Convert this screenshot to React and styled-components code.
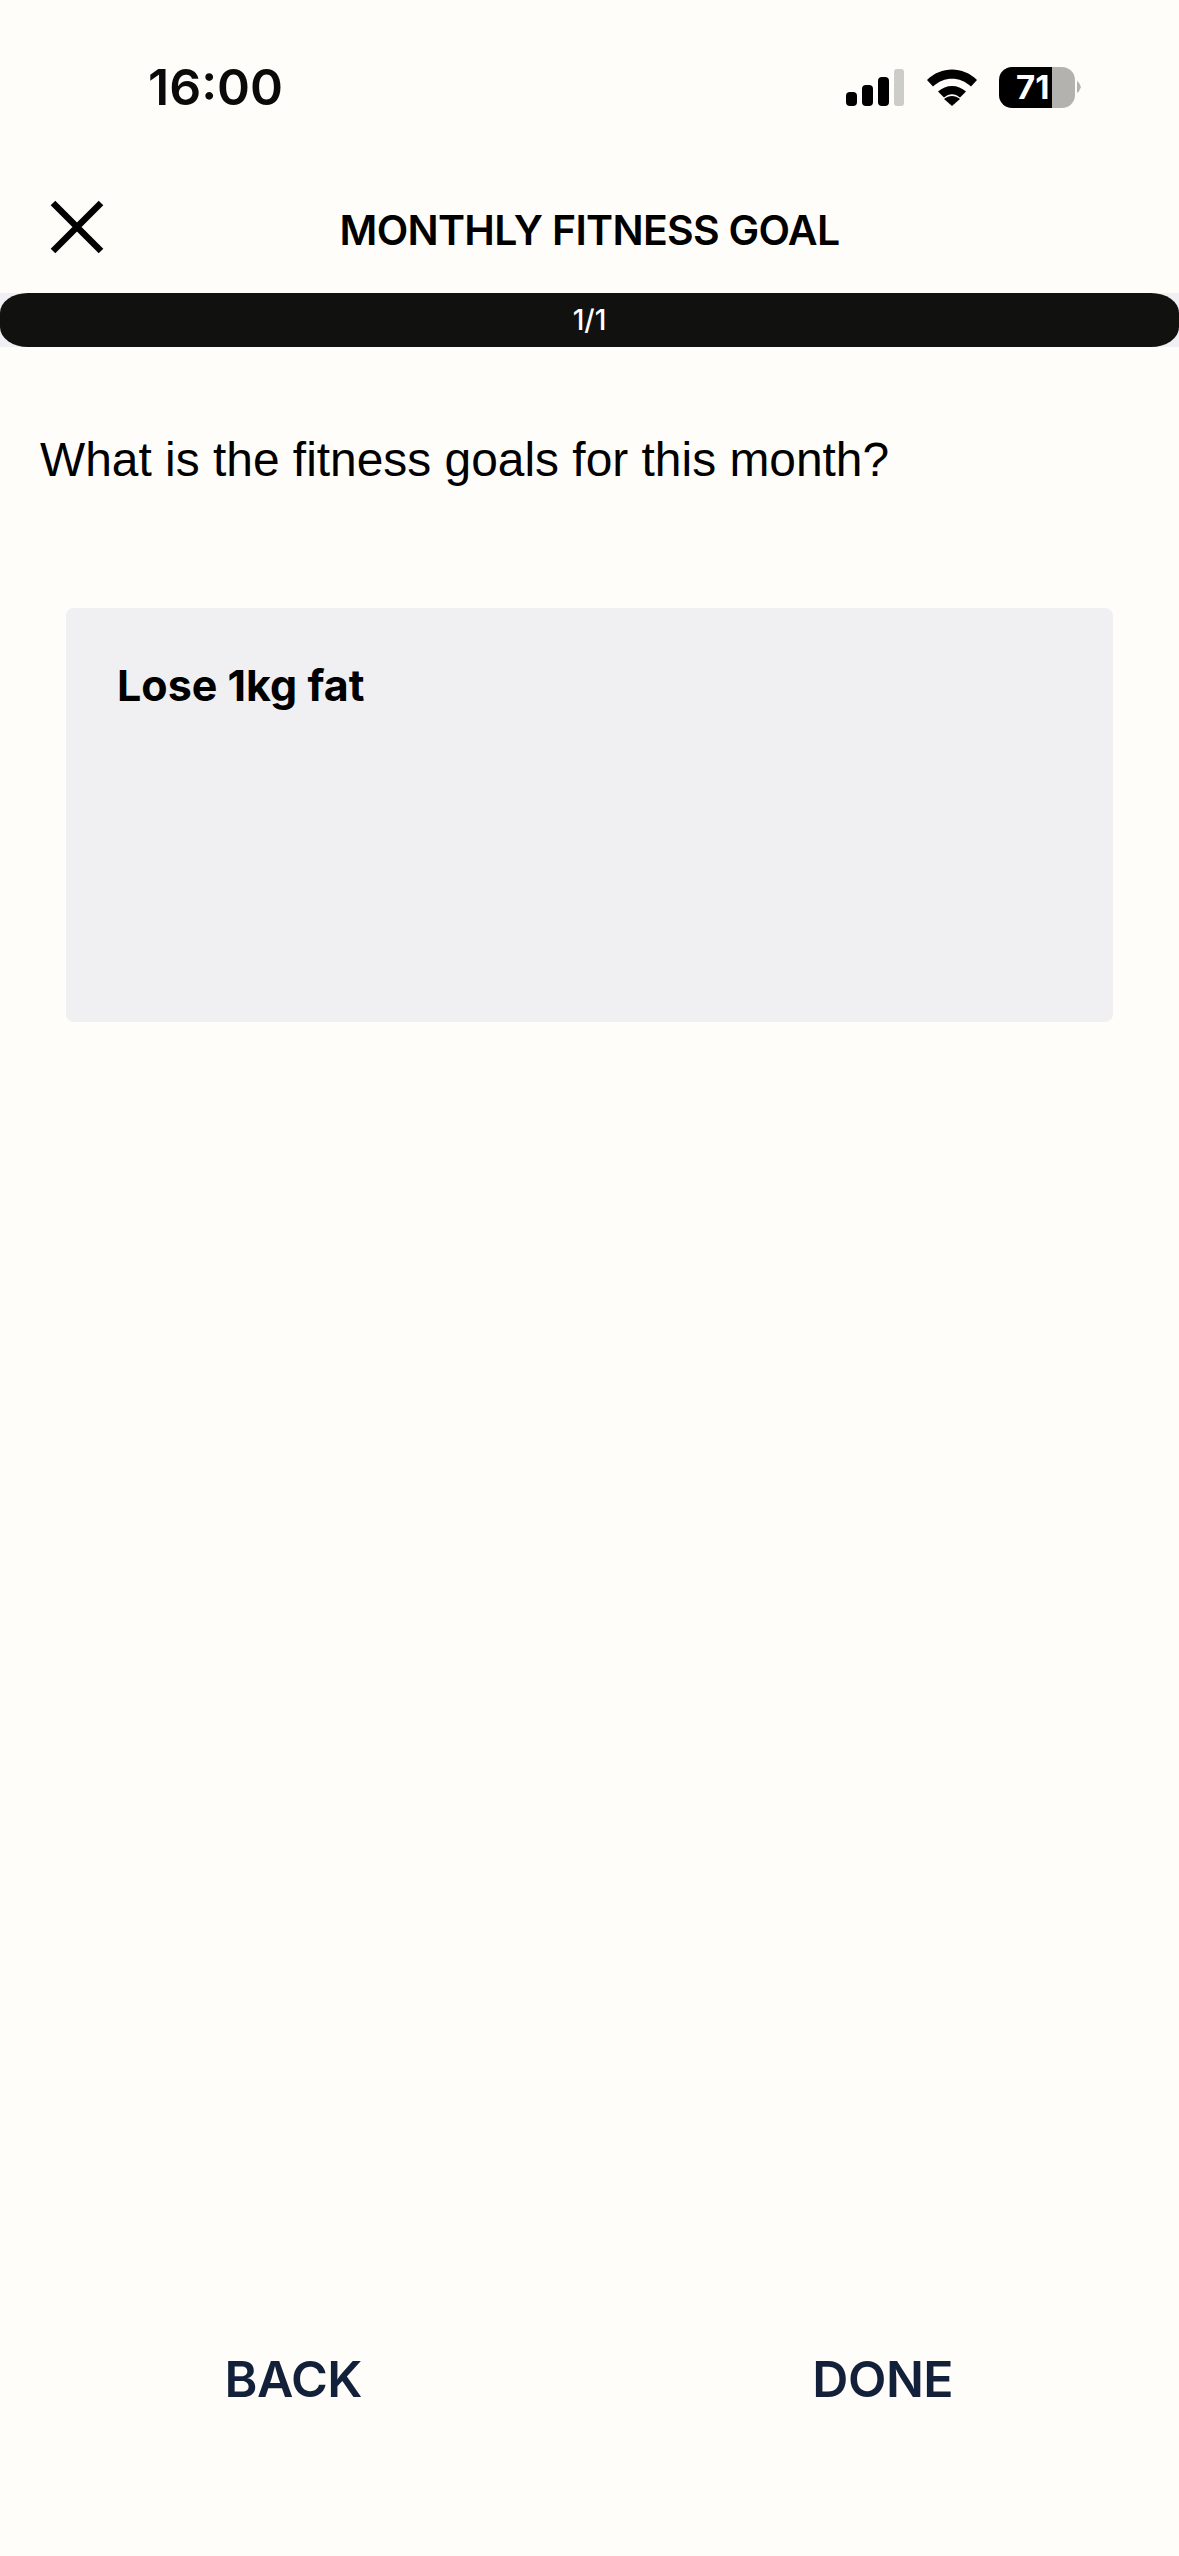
import React from 'react';
import styled, { createGlobalStyle } from 'styled-components';

const GlobalStyle = createGlobalStyle`
  html, body {
    margin: 0;
    padding: 0;
    background: #fffdf9;
  }
  * {
    box-sizing: border-box;
  }
`;

const Page = styled.div`
  width: 1179px;
  height: 2556px;
  display: flex;
  flex-direction: column;
  background: #fffdf9;
  color: #000;
  font-family: Inter, "Noto Sans", sans-serif;
  overflow: hidden;
`;

const StatusBar = styled.div`
  height: 180px;
  padding: 60px 98px 66px 148px;
  display: flex;
  align-items: center;
  justify-content: space-between;
`;

const Time = styled.div`
  font-size: 50px;
  font-weight: 600;
  line-height: 54px;
  color: #0a0a0a;
`;

const StatusIcons = styled.div`
  display: flex;
  align-items: center;
`;

const Signal = styled.svg`
  width: 58px;
  height: 37px;
  margin-right: 23px;
`;

const Wifi = styled.svg`
  width: 50px;
  height: 37px;
  margin-right: 22px;
`;

const Battery = styled.div`
  width: 76px;
  height: 41px;
  border-radius: 13px;
  background: linear-gradient(90deg, #000 ${p => p.$level}%, #b3b2ae ${p => p.$level}%);
  color: #fff;
  font-size: 33px;
  font-weight: 700;
  line-height: 41px;
  padding-left: 17px;
`;

const BatteryNub = styled.div`
  width: 4px;
  height: 12px;
  margin-left: 2px;
  background: #b3b2ae;
  clip-path: polygon(0 0, 50% 15%, 100% 50%, 50% 85%, 0 100%);
`;

const Header = styled.div`
  height: 100px;
  padding-left: 50px;
  display: grid;
  grid-template-columns: 1fr auto 1fr;
  align-items: center;
`;

const CloseIcon = styled.svg`
  width: 54px;
  height: 54px;
  margin-bottom: 6px;
`;

const Title = styled.h1`
  margin: 0;
  font-size: 41px;
  font-weight: 600;
  line-height: 50px;
  letter-spacing: -0.7px;
  white-space: nowrap;
  transform: translateX(-25px);
`;

const ProgressTrack = styled.div`
  position: relative;
  height: 54px;
  margin-top: 13px;
  background: #efeff4;
`;

const ProgressFill = styled.div`
  height: 100%;
  border-radius: 28px / 20px;
  background: #11110f;
`;

const ProgressLabel = styled.span`
  position: absolute;
  inset: 0;
  display: flex;
  align-items: center;
  justify-content: center;
  color: #fff;
  font-size: 28px;
  font-weight: 500;
`;

const Question = styled.p`
  margin: 83px 0 0;
  padding-left: 40px;
  font-family: "Liberation Sans", Arial, sans-serif;
  font-size: 47.900px;
  line-height: 60px;
`;

const AnswerCard = styled.div`
  height: 414px;
  margin: 118px 66px 0;
  padding: 49px 0 0 51px;
  border-radius: 8px;
  background: #f0f0f3;
  font-size: 43px;
  font-weight: 700;
  line-height: 56px;
`;

const Footer = styled.div`
  margin-top: auto;
  padding-bottom: 147px;
  display: grid;
  grid-template-columns: 1fr 1fr;
`;

const FooterButton = styled.button`
  border: 0;
  padding: 0 3px 0 0;
  background: none;
  color: #12203a;
  font-family: inherit;
  font-size: 50px;
  font-weight: 600;
  line-height: 60px;
  letter-spacing: -0.5px;
  text-align: center;
`;

export default function App() {
  return (
    <Page>
      <GlobalStyle />
      <StatusBar>
        <Time>16:00</Time>
        <StatusIcons>
          <Signal viewBox="0 0 58 37">
            <rect x="0" y="23" width="11" height="14" rx="4" fill="#000" />
            <rect x="16" y="16" width="11" height="21" rx="4" fill="#000" />
            <rect x="32" y="8" width="11" height="29" rx="4" fill="#000" />
            <rect x="48" y="0" width="10" height="37" rx="3" fill="#ccccc8" />
          </Signal>
          <Wifi viewBox="0 0 50 37">
            <path d="M0 11C14 -3 36 -3 50 11L44 17.500C33 7 17 7 6 17.500Z" fill="#000" />
            <path d="M11 22.500C19 15 31 15 39 22.500L33 28.500C28 24 22 24 17 28.500Z" fill="#000" />
            <path d="M25 37L17 30C22 26 28 26 33 30Z" fill="#000" />
          </Wifi>
          <Battery $level={70}>71</Battery>
          <BatteryNub />
        </StatusIcons>
      </StatusBar>

      <Header>
        <CloseIcon viewBox="0 0 54 54">
          <path d="M3 3L51 51M51 3L3 51" stroke="#000" strokeWidth="6.500" fill="none" />
        </CloseIcon>
        <Title>MONTHLY FITNESS GOAL</Title>
      </Header>

      <ProgressTrack>
        <ProgressFill style={{ width: '100%' }} />
        <ProgressLabel>1/1</ProgressLabel>
      </ProgressTrack>

      <Question>What is the fitness goals for this month?</Question>

      <AnswerCard>Lose 1kg fat</AnswerCard>

      <Footer>
        <FooterButton>BACK</FooterButton>
        <FooterButton>DONE</FooterButton>
      </Footer>
    </Page>
  );
}
